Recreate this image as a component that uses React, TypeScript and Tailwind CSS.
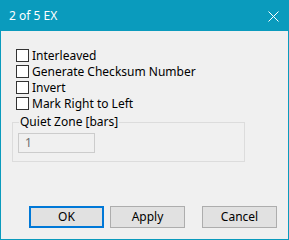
import React from "react";

const font = { fontFamily: '"Segoe UI", "Noto Sans", "Liberation Sans", sans-serif' };

function Check({ label }: { label: string }) {
  return (
    <div className="flex items-start h-[16px]">
      <div className="mt-[1px] w-[13px] h-[13px] border border-[#333333] bg-white shrink-0" />
      <span className="ml-[3px] text-[12px] leading-[16px] text-black whitespace-nowrap">{label}</span>
    </div>
  );
}

function Btn({ label, primary, className }: { label: string; primary?: boolean; className?: string }) {
  return (
    <div
      className={
        "w-[75px] h-[22px] flex items-center justify-center text-[12px] text-black bg-[#e1e1e1] " +
        (primary ? "border-2 border-[#0078d7]" : "border border-[#adadad]") +
        " " +
        (className ?? "")
      }
    >
      {label}
    </div>
  );
}

export default function App() {
  return (
    <div style={font} className="w-[289px] h-[240px] border border-[#0a9bbd] bg-[#f0f0f0] flex flex-col">
      <div className="h-[30px] bg-[#0a9bbd] flex items-center justify-between shrink-0">
        <span className="ml-[8px] text-[12px] leading-[16px] text-white">2 of 5 EX</span>
        <svg width="11" height="11" viewBox="0 0 11 11" className="mr-[9px]">
          <path d="M0.5 0.5 L10.5 10.5 M10.5 0.5 L0.5 10.5" stroke="white" strokeWidth="1" fill="none" />
        </svg>
      </div>
      <div className="flex-1 flex flex-col">
        <div className="mt-[17px] ml-[15px] flex flex-col">
          <Check label="Interleaved" />
          <Check label="Generate Checksum Number" />
          <Check label="Invert" />
          <Check label="Mark Right to Left" />
        </div>
        <div className="relative mt-[10px] ml-[11px] w-[233px] h-[40px] border border-[#dcdcdc]">
          <span className="absolute left-[6px] -top-[9px] px-[1px] bg-[#f0f0f0] text-[12px] leading-[16px] text-black whitespace-nowrap">
            Quiet Zone [bars]
          </span>
          <div className="ml-[5px] mt-[10px] w-[77px] h-[20px] border border-[#cccccc] bg-[#f0f0f0] flex items-center">
            <span className="ml-[6px] text-[12px] leading-[16px] text-[#6d6d6d]">1</span>
          </div>
        </div>
        <div className="mt-[44px] flex">
          <Btn label="OK" primary className="ml-[28px]" />
          <Btn label="Apply" className="ml-[6px]" />
          <Btn label="Cancel" className="ml-[17px]" />
        </div>
      </div>
    </div>
  );
}
